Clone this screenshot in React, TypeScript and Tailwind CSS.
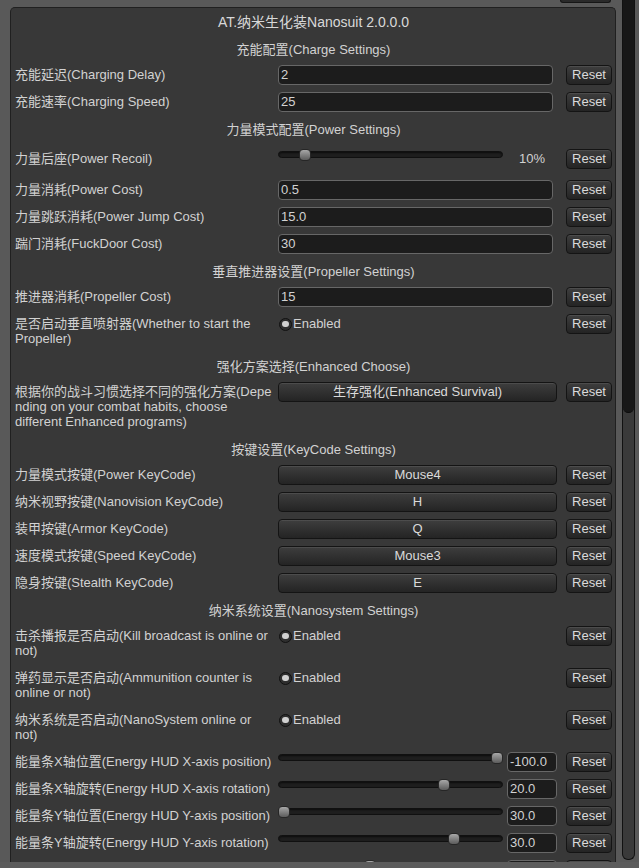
import React from 'react';

type Row =
  | { kind: 'header'; text: string }
  | { kind: 'input'; label: string[]; value: string }
  | { kind: 'percent'; label: string[]; pos: number; text: string }
  | { kind: 'toggle'; label: string[] }
  | { kind: 'button'; label: string[]; value: string }
  | { kind: 'slider'; label: string[]; pos: number; value: string };

const rows: Row[] = [
  { kind: 'header', text: '充能配置(Charge Settings)' },
  { kind: 'input', label: ['充能延迟(Charging Delay)'], value: '2' },
  { kind: 'input', label: ['充能速率(Charging Speed)'], value: '25' },
  { kind: 'header', text: '力量模式配置(Power Settings)' },
  { kind: 'percent', label: ['力量后座(Power Recoil)'], pos: 21, text: '10%' },
  { kind: 'input', label: ['力量消耗(Power Cost)'], value: '0.5' },
  { kind: 'input', label: ['力量跳跃消耗(Power Jump Cost)'], value: '15.0' },
  { kind: 'input', label: ['踹门消耗(FuckDoor Cost)'], value: '30' },
  { kind: 'header', text: '垂直推进器设置(Propeller Settings)' },
  { kind: 'input', label: ['推进器消耗(Propeller Cost)'], value: '15' },
  { kind: 'toggle', label: ['是否启动垂直喷射器(Whether to start the', 'Propeller)'] },
  { kind: 'header', text: '强化方案选择(Enhanced Choose)' },
  {
    kind: 'button',
    label: ['根据你的战斗习惯选择不同的强化方案(Depe', 'nding on your combat habits, choose', 'different Enhanced programs)'],
    value: '生存强化(Enhanced Survival)',
  },
  { kind: 'header', text: '按键设置(KeyCode Settings)' },
  { kind: 'button', label: ['力量模式按键(Power KeyCode)'], value: 'Mouse4' },
  { kind: 'button', label: ['纳米视野按键(Nanovision KeyCode)'], value: 'H' },
  { kind: 'button', label: ['装甲按键(Armor KeyCode)'], value: 'Q' },
  { kind: 'button', label: ['速度模式按键(Speed KeyCode)'], value: 'Mouse3' },
  { kind: 'button', label: ['隐身按键(Stealth KeyCode)'], value: 'E' },
  { kind: 'header', text: '纳米系统设置(Nanosystem Settings)' },
  { kind: 'toggle', label: ['击杀播报是否启动(Kill broadcast is online or', 'not)'] },
  { kind: 'toggle', label: ['弹药显示是否启动(Ammunition counter is', 'online or not)'] },
  { kind: 'toggle', label: ['纳米系统是否启动(NanoSystem online or', 'not)'] },
  { kind: 'slider', label: ['能量条X轴位置(Energy HUD X-axis position)'], pos: 213, value: '-100.0' },
  { kind: 'slider', label: ['能量条X轴旋转(Energy HUD X-axis rotation)'], pos: 160, value: '20.0' },
  { kind: 'slider', label: ['能量条Y轴位置(Energy HUD Y-axis position)'], pos: 0, value: '30.0' },
  { kind: 'slider', label: ['能量条Y轴旋转(Energy HUD Y-axis rotation)'], pos: 170, value: '30.0' },
  // next row is scrolled out of view, only the tops of its controls show
  { kind: 'slider', label: [''], pos: 86, value: '' },
];

const btn =
  'rounded-[4px] border border-[#141414] bg-gradient-to-b from-[#3e3e3e] to-[#242424] shadow-[inset_0_1px_0_rgba(255,255,255,0.08)] text-[#dadada]';

function Label({ lines }: { lines: string[] }) {
  return (
    <div className="w-[263px] flex-none pt-[2px] pb-[3px] leading-[15px]">
      {lines.map((l, i) => (
        <div key={i} className="h-[15px] whitespace-nowrap">
          {l}
        </div>
      ))}
    </div>
  );
}

function Reset({ text }: { text: string }) {
  return (
    <div className={`ml-auto flex h-[20px] w-[46px] flex-none items-center justify-center ${btn}`}>{text}</div>
  );
}

function Slider({ pos }: { pos: number }) {
  return (
    <div className="relative h-[12px] w-[225px] flex-none">
      <div className="absolute left-0 right-0 top-[2px] h-[7px] rounded-full border border-[#101010] bg-[#1e1e1e] shadow-[inset_0_1px_2px_rgba(0,0,0,0.6)]" />
      <div
        className="absolute top-0 h-[12px] w-[12px] rounded-[4px] border border-[#262626] bg-gradient-to-b from-[#a8a8a8] to-[#5c5c5c]"
        style={{ left: pos }}
      />
    </div>
  );
}

function RowView({ row }: { row: Row }) {
  if (row.kind === 'header') {
    return <div className="flex h-[19px] items-center justify-center pt-[2px]">{row.text}</div>;
  }
  let control: React.ReactNode = null;
  let extra = '';
  if (row.kind === 'input') {
    control = (
      <div className="h-[20px] w-[275px] rounded-[4px] border border-[#676767] bg-[#1c1c1c] pl-[2px] leading-[18px]">
        {row.value}
      </div>
    );
  } else if (row.kind === 'button') {
    control = (
      <div className={`flex h-[20px] w-[279px] items-center justify-center ${btn}`}>{row.value}</div>
    );
  } else if (row.kind === 'toggle') {
    control = (
      <div className="ml-[1px] flex h-[20px] items-center gap-[1px]">
        <div className="flex h-[13px] w-[13px] items-center justify-center rounded-full border border-[#111] bg-[#2e2e2e]">
          <div className="h-[6px] w-[7px] rounded-full bg-[#d0d0d0]" />
        </div>
        <span>Enabled</span>
      </div>
    );
  } else if (row.kind === 'percent') {
    extra = 'py-[4px]';
    control = (
      <div className="flex w-[279px] items-start">
        <Slider pos={row.pos} />
        <div className="ml-[4px] flex h-[20px] w-[50px] items-center justify-center">{row.text}</div>
      </div>
    );
  } else if (row.kind === 'slider') {
    control = (
      <div className="flex w-[279px] items-start">
        <Slider pos={row.pos} />
        <div className="ml-[4px] h-[20px] w-[50px] rounded-[4px] border border-[#676767] bg-[#1c1c1c] pl-[2px] leading-[18px]">
          {row.value}
        </div>
      </div>
    );
  }
  const partial = row.kind === 'slider' && row.value === '';
  return (
    <div className={`flex items-start ${extra}`}>
      <Label lines={row.label} />
      <div className="w-[279px] flex-none">{control}</div>
      <Reset text={partial ? '' : 'Reset'} />
    </div>
  );
}

export default function App() {
  return (
    <div className="flex h-[868px] w-[639px] flex-col overflow-hidden bg-[#595959] font-['Liberation_Sans','Noto_Sans_CJK_SC',sans-serif] text-[13px] text-[#d2d2d2]">
      <div className="flex h-[862px] overflow-hidden">
        <div className="flex w-[616px] flex-none flex-col pl-[10px]">
          <div className="flex h-[7px] flex-none">
            <div className="ml-[550px] h-[3px] w-[51px] rounded-b-[4px] border border-t-0 border-[#161616] bg-[#2a2a2a]" />
          </div>
          <div className="flex flex-1 flex-col gap-[7px] rounded-t-[5px] border border-b-0 border-[#202020] bg-[#383838] pl-[4px] pr-[3px]">
            <div className="mt-[4px] flex h-[20px] items-center justify-center text-[14px] text-[#d8d8d8]">
              AT.纳米生化装Nanosuit 2.0.0.0
            </div>
            {rows.map((r, i) => (
              <RowView key={i} row={r} />
            ))}
          </div>
        </div>
        <div className="flex flex-1 pl-[6px] pr-[4px]">
          <div className="flex h-[860px] w-[13px] flex-col rounded-b-[6px] border border-t-0 border-[#111] bg-[#3a3a3a]">
            <div className="h-[413px] rounded-b-[6px] border-b border-[#0c0c0c] bg-[#171717]" />
          </div>
        </div>
      </div>
      <div className="h-[6px] flex-none bg-[#5c5c5c]" />
    </div>
  );
}
